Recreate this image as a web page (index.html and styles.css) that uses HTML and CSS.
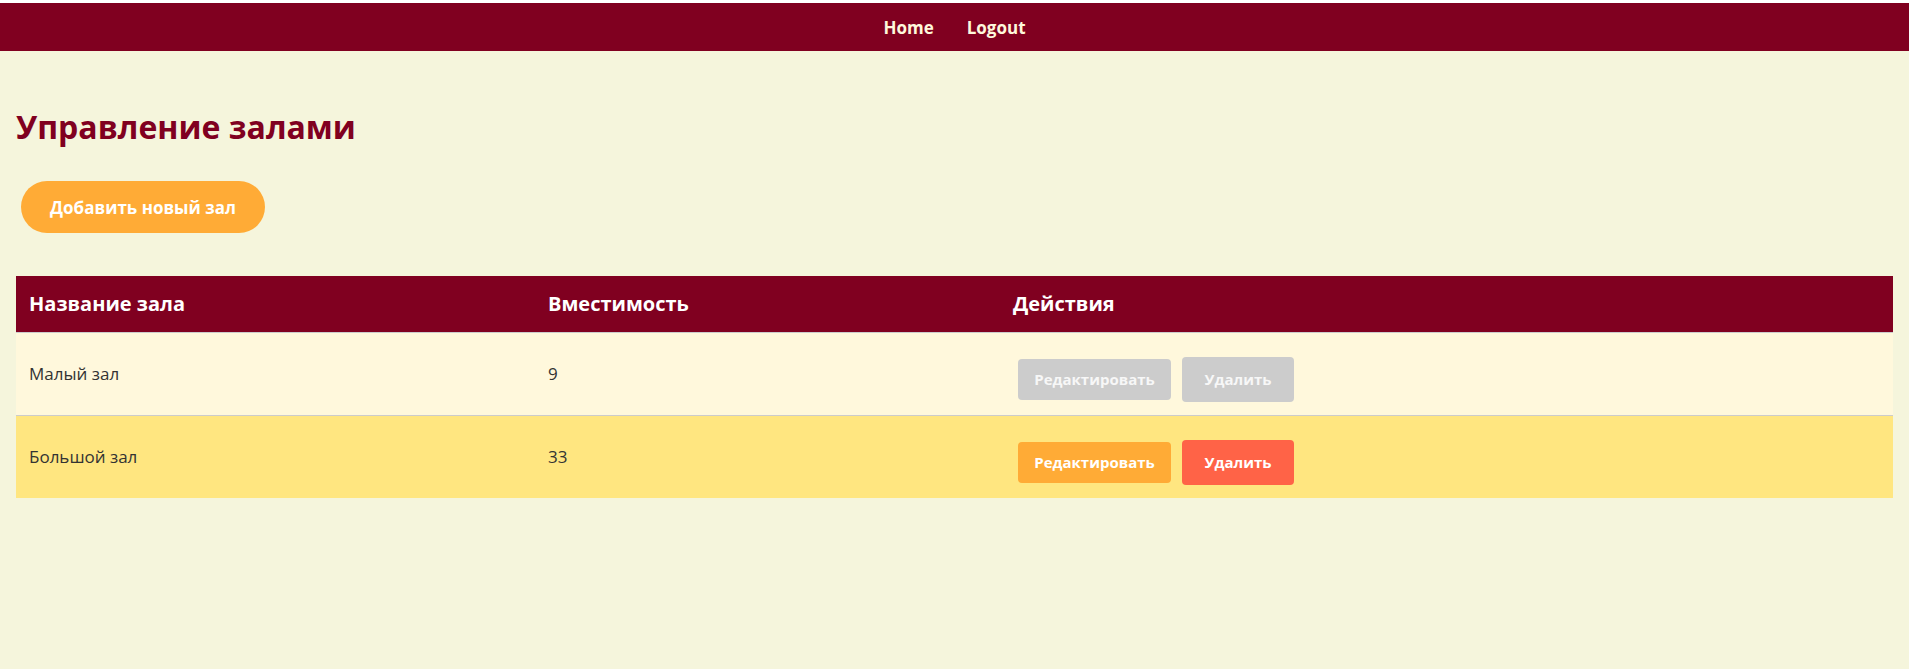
FILE: index.html
```html
<!DOCTYPE html>
<html lang="ru">
<head>
<meta charset="utf-8">
<title>Управление залами</title>
<link rel="stylesheet" href="styles.css">
</head>
<body>
<div class="page">
  <nav class="topnav">
    <a class="navlink" href="#">Home</a>
    <a class="navlink" href="#">Logout</a>
  </nav>
  <main class="content">
    <h1 class="title">Управление залами</h1>
    <button class="btn-add">Добавить новый зал</button>
    <table class="halls">
      <thead>
        <tr>
          <th class="c-name">Название зала</th>
          <th class="c-cap">Вместимость</th>
          <th class="c-act">Действия</th>
        </tr>
      </thead>
      <tbody>
        <tr class="row-light">
          <td>Малый зал</td>
          <td>9</td>
          <td><div class="actions"><button class="btn btn-edit disabled">Редактировать</button><button class="btn btn-del disabled">Удалить</button></div></td>
        </tr>
        <tr class="row-yellow">
          <td>Большой зал</td>
          <td>33</td>
          <td><div class="actions"><button class="btn btn-edit">Редактировать</button><button class="btn btn-del">Удалить</button></div></td>
        </tr>
      </tbody>
    </table>
  </main>
</div>
</body>
</html>
```
FILE: styles.css
```css
html, body {
  margin: 0;
  padding: 0;
  background: #ffffff;
}
body {
  padding-top: 3px;
  font-family: "Comic Sans MS", "Open Sans", sans-serif;
}
.page {
  background: #f5f5dc;
  min-height: 666px;
}
.topnav {
  height: 48px;
  background: #800020;
  display: flex;
  justify-content: center;
  align-items: center;
  gap: 33px;
}
.navlink {
  color: #fff8dc;
  text-decoration: none;
  font-weight: 700;
  font-size: 17px;
}
.content {
  padding: 0 16px;
}
.title {
  margin: 54px 0 0 0;
  line-height: 44px;
  font-size: 32px;
  font-weight: 700;
  color: #800020;
}
.btn-add {
  margin: 32px 0 0 5px;
  height: 52px;
  width: 244px;
  border: none;
  border-radius: 26px;
  background: #ffab36;
  color: #ffffff;
  font-family: inherit;
  font-weight: 700;
  font-size: 17px;
  display: block;
}
.halls {
  margin-top: 43px;
  width: 100%;
  border-collapse: collapse;
  table-layout: fixed;
}
.c-name { width: 519px; }
.c-cap { width: 465px; }
.halls th {
  background: #800020;
  color: #ffffff;
  text-align: left;
  font-weight: 700;
  font-size: 20px;
  height: 56px;
  padding: 0 13px;
  box-sizing: border-box;
  border-bottom: 1px solid #cccccc;
}
.halls td {
  height: 82px;
  padding: 0 13px;
  font-size: 17px;
  color: #333333;
  box-sizing: content-box;
}
.row-light td {
  background: #fff8dc;
  border-bottom: 1px solid #cccccc;
}
.row-yellow td {
  background: #ffe680;
}
.actions {
  display: flex;
  align-items: center;
  gap: 11px;
  padding-top: 11px;
  margin-left: 5px;
}
.btn {
  border: none;
  border-radius: 4px;
  color: #ffffff;
  font-family: inherit;
  font-weight: 700;
  font-size: 15px;
  padding: 0;
}
.btn-edit {
  width: 153px;
  height: 41px;
  background: #ffab36;
}
.btn-del {
  width: 112px;
  height: 45px;
  background: #ff6347;
}
.btn.disabled {
  background: #cccccc;
  color: #f7f7f7;
}
```
